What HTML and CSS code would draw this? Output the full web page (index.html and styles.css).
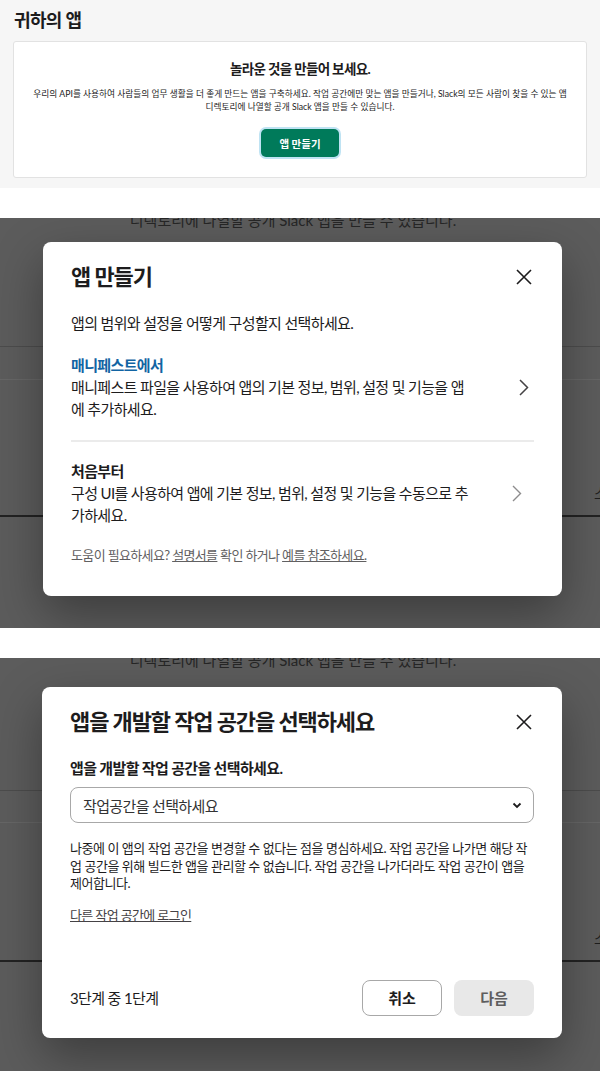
FILE: index.html
```html
<!DOCTYPE html>
<html lang="ko">
<head>
    <meta charset="UTF-8">
    <meta name="viewport" content="width=device-width, initial-scale=1.0">
    <title>귀하의 앱</title>
    <link rel="stylesheet" href="styles.css">
</head>
<body>

<!-- Apps-Übersicht -->
<section class="apps">
    <h2 class="apps-title">귀하의 앱</h2>
    <div class="apps-card">
        <h3>놀라운 것을 만들어 보세요.</h3>
        <p>우리의 API를 사용하여 사람들의 업무 생활을 더 좋게 만드는 앱을 구축하세요. 작업 공간에만 맞는 앱을 만들거나, Slack의 모든 사람이 찾을 수 있는 앱<br>디렉토리에 나열할 공개 Slack 앱을 만들 수 있습니다.</p>
        <button class="green-button">앱 만들기</button>
    </div>
</section>

<!-- Schritt 0: App erstellen -->
<section class="scene scene-one">
    <div class="backdrop">
        <p class="backdrop-text">디렉토리에 나열할 공개 Slack 앱을 만들 수 있습니다.</p>
        <div class="rule rule-a"></div>
        <div class="rule rule-b"></div>
        <span class="edge-glyph">소</span>
        <div class="rule rule-c"></div>
    </div>

    <div class="modal">
        <div class="modal-head">
            <h2>앱 만들기</h2>
            <button class="close" aria-label="닫기">
                <svg width="16" height="16" viewBox="0 0 16 16"><path d="M1 1 L15 15 M15 1 L1 15" stroke="#1d1c1d" stroke-width="1.6" fill="none"/></svg>
            </button>
        </div>
        <p class="lead">앱의 범위와 설정을 어떻게 구성할지 선택하세요.</p>

        <div class="option">
            <div class="option-text">
                <div class="option-title blue">매니페스트에서</div>
                <div>매니페스트 파일을 사용하여 앱의 기본 정보, 범위, 설정 및 기능을 앱에 추가하세요.</div>
            </div>
            <svg class="chevron" width="10" height="17" viewBox="0 0 10 17"><path d="M1 1 L8.5 8.5 L1 16" stroke="#454245" stroke-width="1.5" fill="none"/></svg>
        </div>
        <div class="option second">
            <div class="option-text">
                <div class="option-title">처음부터</div>
                <div>구성 UI를 사용하여 앱에 기본 정보, 범위, 설정 및 기능을 수동으로 추가하세요.</div>
            </div>
            <svg class="chevron faded" width="10" height="17" viewBox="0 0 10 17"><path d="M1 1 L8.5 8.5 L1 16" stroke="#8d8c8d" stroke-width="1.4" fill="none"/></svg>
        </div>

        <p class="help">도움이 필요하세요? <a href="#">설명서를</a> 확인 하거나 <a href="#">예를 참조하세요.</a></p>
    </div>
</section>

<!-- Schritt 1: Workspace wählen -->
<section class="scene scene-two">
    <div class="backdrop">
        <p class="backdrop-text">디렉토리에 나열할 공개 Slack 앱을 만들 수 있습니다.</p>
        <div class="rule rule-a"></div>
        <div class="rule rule-b"></div>
        <span class="edge-glyph">소</span>
        <div class="rule rule-c"></div>
    </div>

    <div class="modal">
        <div class="modal-head">
            <h2>앱을 개발할 작업 공간을 선택하세요</h2>
            <button class="close" aria-label="닫기">
                <svg width="16" height="16" viewBox="0 0 16 16"><path d="M1 1 L15 15 M15 1 L1 15" stroke="#1d1c1d" stroke-width="1.6" fill="none"/></svg>
            </button>
        </div>

        <label class="field-label">앱을 개발할 작업 공간을 선택하세요.</label>
        <div class="select">
            <span>작업공간을 선택하세요</span>
            <svg width="10" height="7" viewBox="0 0 10 7"><path d="M1.5 1.5 L5 5 L8.5 1.5" stroke="#1d1c1d" stroke-width="1.8" fill="none"/></svg>
        </div>
        <p class="note">나중에 이 앱의 작업 공간을 변경할 수 없다는 점을 명심하세요. 작업 공간을 나가면 해당 작업 공간을 위해 빌드한 앱을 관리할 수 없습니다. 작업 공간을 나가더라도 작업 공간이 앱을 제어합니다.</p>
        <a class="signin" href="#">다른 작업 공간에 로그인</a>

        <div class="modal-foot">
            <span>3단계 중 1단계</span>
            <div class="foot-buttons">
                <button class="btn-outline">취소</button>
                <button class="btn-disabled">다음</button>
            </div>
        </div>
    </div>
</section>

</body>
</html>
```

FILE: styles.css
```css
/* Grundlayout */
body {
    margin: 0;
    font-family: Lato, 'Noto Sans CJK KR', sans-serif;
    letter-spacing: -0.04em;
    color: #1d1c1d;
    background-color: #fff;
}

/* Apps-Übersicht */
.apps {
    background-color: #f6f6f6;
    height: 188px;
    padding: 8px 13px 0;
    box-sizing: border-box;
}

.apps-title {
    font-size: 18px;
    font-weight: 700;
    margin: 0 0 9px 1px;
    line-height: 24px;
}

.apps-card {
    background-color: #fff;
    border: 1px solid #e2e2e2;
    border-radius: 3px;
    height: 137px;
    box-sizing: border-box;
    text-align: center;
    padding-top: 17px;
}

.apps-card h3 {
    font-size: 13.5px;
    font-weight: 700;
    margin: 0 0 8px;
    line-height: 20px;
}

.apps-card p {
    font-size: 8.7px;
    letter-spacing: 0;
    line-height: 13px;
    margin: 0 0 16px;
    color: #1d1c1d;
}

.green-button {
    background-color: #007a5a;
    color: #fff;
    border: none;
    border-radius: 5px;
    font-family: inherit;
    font-size: 10.5px;
    font-weight: 700;
    width: 78px;
    height: 28px;
    box-shadow: 0 0 0 2px #bfe3f3;
}

/* Overlay-Szenen */
.scene {
    display: grid;
    grid-template-columns: minmax(0, 1fr);
    overflow: hidden;
    background-color: #5c5c5c;
    margin-top: 30px;
}

.scene > * {
    grid-area: 1 / 1;
}

.scene-one {
    height: 410px;
}

.scene-two {
    height: 413px;
}

.backdrop {
    overflow: hidden;
}

.backdrop-text {
    margin: -9px 0 0;
    text-align: center;
    padding-right: 14px;
    font-size: 15px;
    line-height: 22px;
    letter-spacing: 0;
    color: #262626;
}

.rule {
    height: 1px;
}

.rule-a {
    background-color: #4c4c4c;
    margin-top: 115px;
}

.rule-b {
    background-color: #666;
    margin-top: 32px;
}

.rule-c {
    background-color: #222;
    height: 2px;
    margin-top: 11px;
}

.edge-glyph {
    display: block;
    margin: 102px 0 0 594px;
    font-size: 15px;
    line-height: 22px;
    color: #1e1e1e;
}

.scene-two .rule-a {
    margin-top: 119px;
}

.scene-two .rule-b {
    margin-top: 31px;
}

.scene-two .edge-glyph {
    margin-top: 104px;
}

/* Modal */
.modal {
    position: relative;
    z-index: 1;
    align-self: start;
    background-color: #fff;
    border-radius: 8px;
    box-shadow: 0 18px 48px rgba(0, 0, 0, 0.35);
    padding: 20px 28px 0;
    box-sizing: border-box;
}

.scene-one .modal {
    margin: 24px 38px 0 43px;
    height: 354px;
}

.scene-two .modal {
    margin: 29px 38px 0 42px;
    height: 351px;
}

.modal-head {
    display: flex;
    justify-content: space-between;
    align-items: center;
    height: 30px;
}

.modal-head h2 {
    margin: 0;
    font-size: 22px;
    font-weight: 700;
    line-height: 30px;
    letter-spacing: -0.05em;
}

.close {
    background: none;
    border: none;
    padding: 0;
    margin-right: 2px;
    display: flex;
}

.lead {
    font-size: 15px;
    line-height: 22px;
    margin: 20px 0 20px;
}

.option {
    display: flex;
    align-items: center;
    justify-content: space-between;
    font-size: 15px;
    line-height: 22px;
    padding-bottom: 20px;
    border-bottom: 2px solid #ebebeb;
}

.option.second {
    border-bottom: none;
    padding-top: 18px;
}

.option-text {
    width: 404px;
}

.option-title {
    font-weight: 700;
}

.blue {
    color: #1264a3;
}

.chevron {
    margin-right: 5px;
}

.chevron.faded {
    margin-right: 12px;
}

.help {
    font-size: 13px;
    line-height: 18px;
    color: #616061;
    margin: 0;
}

.help a {
    color: #616061;
}

/* Workspace-Auswahl */
.field-label {
    display: block;
    font-size: 15px;
    font-weight: 700;
    line-height: 22px;
    margin-top: 20px;
}

.select {
    display: flex;
    justify-content: space-between;
    align-items: center;
    height: 36px;
    box-sizing: border-box;
    border: 1px solid #a8a8a8;
    border-radius: 8px;
    padding: 0 11px 0 12px;
    margin-top: 8px;
    font-size: 15px;
    color: #333;
}

.note {
    font-size: 13px;
    line-height: 17.5px;
    letter-spacing: -0.035em;
    margin: 17px 0 0;
    color: #1d1c1d;
}

.signin {
    display: inline-block;
    font-size: 13px;
    line-height: 18px;
    margin-top: 13px;
    color: #454245;
}

.modal-foot {
    display: flex;
    justify-content: space-between;
    align-items: center;
    margin-top: 56px;
    font-size: 15px;
}

.foot-buttons {
    display: flex;
    gap: 12px;
}

.btn-outline, .btn-disabled {
    width: 80px;
    height: 36px;
    border-radius: 8px;
    font-family: inherit;
    font-size: 15px;
    font-weight: 700;
}

.btn-outline {
    background-color: #fff;
    border: 1px solid #a8a8a8;
    color: #1d1c1d;
}

.btn-disabled {
    background-color: #e8e8e8;
    border: none;
    color: #5e5d5e;
}
```
